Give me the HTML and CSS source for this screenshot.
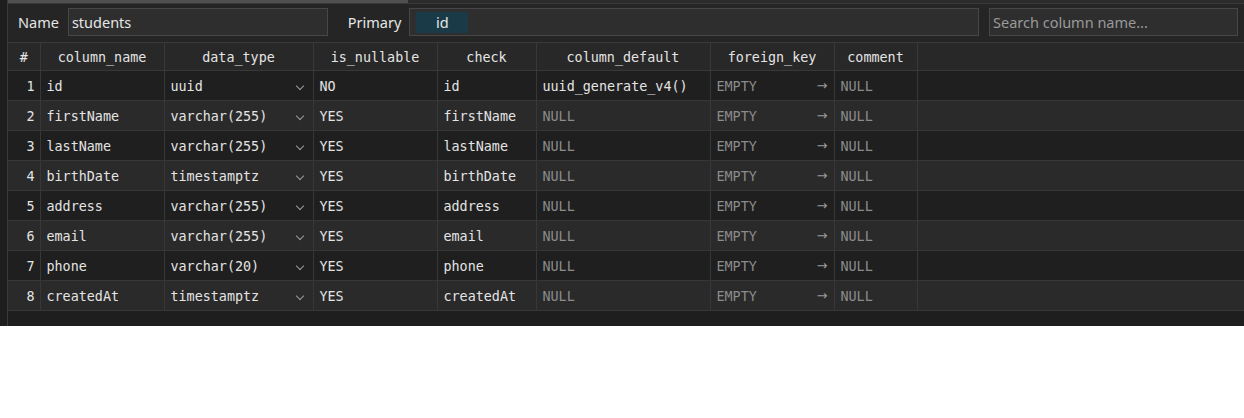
FILE: index.html
```html
<!DOCTYPE html>
<html>
<head>
<meta charset="utf-8">
<link rel="stylesheet" href="styles.css">
</head>
<body>
<div class="app">
  <div class="gutter"></div>
  <div class="main">
    <div class="topbar"><div class="thumb"></div></div>
    <div class="toolbar">
      <span class="label">Name</span>
      <div class="input name-input">students</div>
      <span class="label primary-label">Primary</span>
      <div class="input primary-input"><span class="chip">id</span></div>
      <div class="input search-input">Search column name...</div>
    </div>
    <table class="grid">
      <colgroup>
        <col class="c-num"><col class="c-name"><col class="c-type"><col class="c-null"><col class="c-check"><col class="c-def"><col class="c-fk"><col class="c-comment"><col>
      </colgroup>
      <thead>
        <tr>
          <th>#</th><th>column_name</th><th>data_type</th><th>is_nullable</th><th>check</th><th>column_default</th><th>foreign_key</th><th>comment</th><th class="filler"></th>
        </tr>
      </thead>
      <tbody>
        <tr><td class="num">1</td><td>id</td><td class="type">uuid<span class="chev"></span></td><td>NO</td><td>id</td><td>uuid_generate_v4()</td><td class="fk"><span class="muted">EMPTY</span><span class="arrow">→</span></td><td class="muted">NULL</td><td></td></tr>
        <tr><td class="num">2</td><td>firstName</td><td class="type">varchar(255)<span class="chev"></span></td><td>YES</td><td>firstName</td><td class="muted">NULL</td><td class="fk"><span class="muted">EMPTY</span><span class="arrow">→</span></td><td class="muted">NULL</td><td></td></tr>
        <tr><td class="num">3</td><td>lastName</td><td class="type">varchar(255)<span class="chev"></span></td><td>YES</td><td>lastName</td><td class="muted">NULL</td><td class="fk"><span class="muted">EMPTY</span><span class="arrow">→</span></td><td class="muted">NULL</td><td></td></tr>
        <tr><td class="num">4</td><td>birthDate</td><td class="type">timestamptz<span class="chev"></span></td><td>YES</td><td>birthDate</td><td class="muted">NULL</td><td class="fk"><span class="muted">EMPTY</span><span class="arrow">→</span></td><td class="muted">NULL</td><td></td></tr>
        <tr><td class="num">5</td><td>address</td><td class="type">varchar(255)<span class="chev"></span></td><td>YES</td><td>address</td><td class="muted">NULL</td><td class="fk"><span class="muted">EMPTY</span><span class="arrow">→</span></td><td class="muted">NULL</td><td></td></tr>
        <tr><td class="num">6</td><td>email</td><td class="type">varchar(255)<span class="chev"></span></td><td>YES</td><td>email</td><td class="muted">NULL</td><td class="fk"><span class="muted">EMPTY</span><span class="arrow">→</span></td><td class="muted">NULL</td><td></td></tr>
        <tr><td class="num">7</td><td>phone</td><td class="type">varchar(20)<span class="chev"></span></td><td>YES</td><td>phone</td><td class="muted">NULL</td><td class="fk"><span class="muted">EMPTY</span><span class="arrow">→</span></td><td class="muted">NULL</td><td></td></tr>
        <tr><td class="num">8</td><td>createdAt</td><td class="type">timestamptz<span class="chev"></span></td><td>YES</td><td>createdAt</td><td class="muted">NULL</td><td class="fk"><span class="muted">EMPTY</span><span class="arrow">→</span></td><td class="muted">NULL</td><td></td></tr>
      </tbody>
    </table>
  </div>
</div>
</body>
</html>
```

FILE: styles.css
```css
* { box-sizing: border-box; }
html, body { margin: 0; padding: 0; background: #ffffff; }
.app {
  width: 1244px;
  height: 326px;
  display: flex;
  background: #1e1e1e;
}
.gutter {
  width: 8px;
  flex: none;
  background: #1e1e1e;
  border-right: 1px solid #3a3a3a;
}
.main {
  flex: 1;
  display: flex;
  flex-direction: column;
  min-width: 0;
}
.topbar {
  height: 4px;
  background: #2b2b2b;
  border-bottom: 1px solid #3a3a3a;
}
.thumb {
  width: 400px;
  height: 3px;
  background: #505050;
}
.toolbar {
  height: 38px;
  display: flex;
  align-items: center;
  padding: 0 6px 2px 10px;
  background: #252526;
  font-family: "Noto Sans", "Open Sans", sans-serif;
  font-size: 14.5px;
  color: #e6e6e6;
}
.label { flex: none; }
.input {
  height: 28px;
  background: #2e2e2e;
  border: 1px solid #474747;
  display: flex;
  align-items: center;
  padding: 0 3px;
  color: #e6e6e6;
}
.name-input { width: 261px; margin-left: 9px; }
.primary-label { margin-left: 20px; }
.primary-input { width: 572px; margin-left: 8px; padding: 0 6px; }
.chip {
  background: #1a3a48;
  color: #e6e6e6;
  width: 52px;
  height: 21px;
  display: flex;
  align-items: center;
  justify-content: center;
}
.search-input { width: 250px; margin-left: 10px; color: #9a9a9a; }

.grid {
  border-collapse: collapse;
  table-layout: fixed;
  width: 100%;
  font-family: "DejaVu Sans Mono", "Liberation Mono", monospace;
  font-size: 13.4px;
  color: #e4e4e4;
}
.c-num { width: 32px; }
.c-name { width: 124px; }
.c-type { width: 149px; }
.c-null { width: 124px; }
.c-check { width: 99px; }
.c-def { width: 174px; }
.c-fk { width: 124px; }
.c-comment { width: 83px; }
.grid th {
  height: 28px;
  font-weight: normal;
  text-align: center;
  background: #282828;
  border: 1px solid #383838;
  border-top: 1px solid #3a3a3a;
  padding: 1px 4px 0;
  white-space: nowrap;
}
.grid th:first-child { border-left: none; }
.grid td {
  height: 30px;
  padding: 1px 6px 0;
  border: 1px solid #373737;
  white-space: nowrap;
  overflow: hidden;
}
.grid td:first-child { border-left: none; }
.grid td:last-child, .grid th:last-child { border-right: none; }
.grid tbody tr:nth-child(odd) td { background: #1f1f1f; }
.grid tbody tr:nth-child(even) td { background: #2a2a2a; }
.grid td.num { text-align: right; padding: 1px 5px 0 0; }
.muted, .grid td.muted { color: #8c8c8c; }
.type { position: relative; }
.chev {
  position: absolute;
  right: 10px;
  top: 12px;
  width: 6px;
  height: 6px;
  border-right: 1.3px solid #9a9a9a;
  border-bottom: 1.3px solid #9a9a9a;
  transform: rotate(45deg);
}
.fk { position: relative; }
.arrow {
  position: absolute;
  right: 6px;
  top: 7px;
  color: #9a9a9a;
  font-family: "DejaVu Sans", sans-serif;
  font-size: 13px;
}
```
